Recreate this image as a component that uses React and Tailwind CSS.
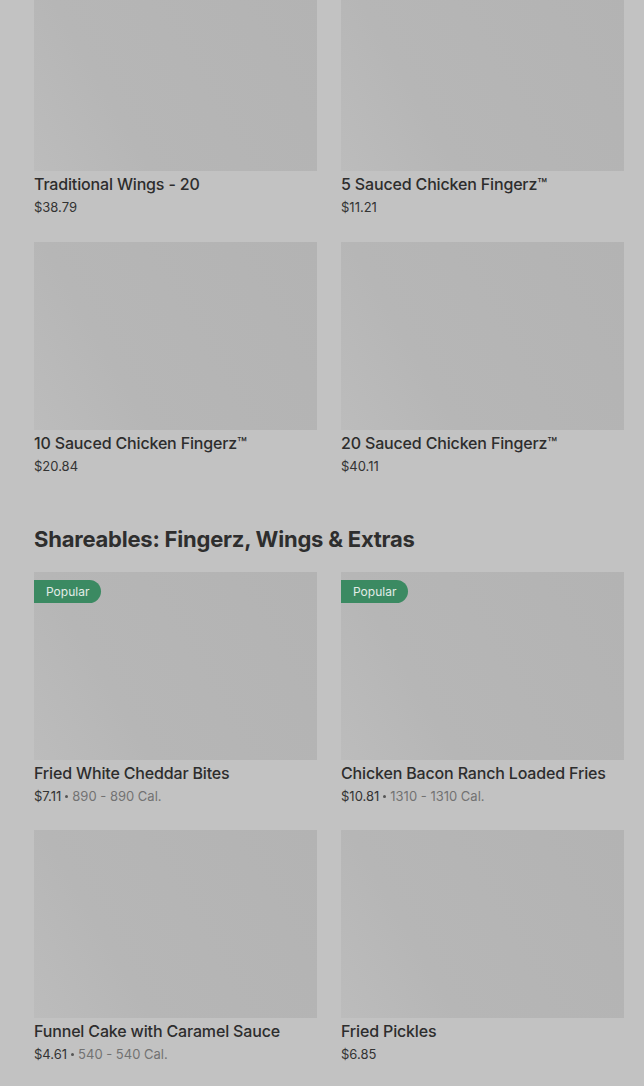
const rowOne = [
  { name: 'Traditional Wings - 20', price: '$38.79' },
  { name: '5 Sauced Chicken Fingerz™', price: '$11.21' },
  { name: '10 Sauced Chicken Fingerz™', price: '$20.84' },
  { name: '20 Sauced Chicken Fingerz™', price: '$40.11' },
];

const shareables = [
  { name: 'Fried White Cheddar Bites', price: '$7.11', cal: '890 - 890 Cal.', popular: true },
  { name: 'Chicken Bacon Ranch Loaded Fries', price: '$10.81', cal: '1310 - 1310 Cal.', popular: true },
  { name: 'Funnel Cake with Caramel Sauce', price: '$4.61', cal: '540 - 540 Cal.' },
  { name: 'Fried Pickles', price: '$6.85' },
];

function ItemCard({ item }) {
  return (
    <div className="flex flex-col">
      <div className="relative h-[188px] bg-[linear-gradient(60deg,#bcbcbc_0%,#b6b6b6_30%,#b3b3b3_100%)]">
        {item.popular && (
          <span className="absolute left-0 top-[8px] h-[23px] pl-[12px] pr-[12px] flex items-center rounded-r-full bg-[#3b8a62] text-[12px] text-[#e3ece7]">
            Popular
          </span>
        )}
      </div>
      <div className="mt-[2px] text-[16px] leading-[22px] font-medium tracking-[-0.01em] text-[#2d2d2d] truncate">{item.name}</div>
      <div className="mt-[2px] h-[20px] flex items-center text-[13px] leading-[20px] text-[#333333]">
        <span>{item.price}</span>
        {item.cal && (
          <>
            <span className="mx-[4px] w-[3px] h-[3px] rounded-full bg-[#555555]" />
            <span className="text-[#727272]">{item.cal}</span>
          </>
        )}
      </div>
    </div>
  );
}

export default function App() {
  return (
    <div className="min-h-screen w-full bg-[#c2c2c2] overflow-hidden font-['Inter',sans-serif] antialiased">
      <div className="pl-[34px] pr-[20px] mt-[-17px]">
        <div className="grid grid-cols-2 gap-x-[24px] gap-y-[25px]">
          {rowOne.map((item) => (
            <ItemCard key={item.name} item={item} />
          ))}
        </div>

        <h2 className="mt-[49px] mb-[19px] text-[22px] leading-[28px] font-bold tracking-[-0.01em] text-[#2e2e2e]">
          Shareables: Fingerz, Wings &amp; Extras
        </h2>

        <div className="grid grid-cols-2 gap-x-[24px] gap-y-[24px]">
          {shareables.map((item) => (
            <ItemCard key={item.name} item={item} />
          ))}
          <div className="h-[188px] bg-[#b5b5b5]" />
          <div className="h-[188px] bg-[#b5b5b5]" />
        </div>
      </div>
    </div>
  );
}
